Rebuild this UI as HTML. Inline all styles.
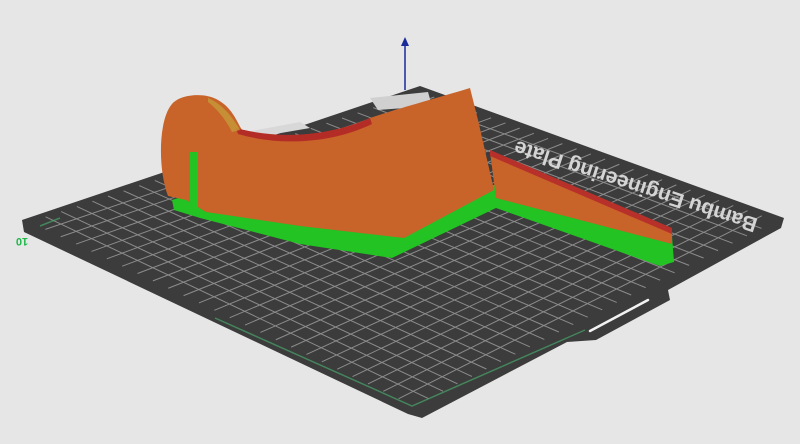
<!DOCTYPE html>
<html><head><meta charset="utf-8"><style>
html,body{margin:0;padding:0;background:#e6e6e6;width:800px;height:444px;overflow:hidden}
svg{display:block}
</style></head><body>
<svg id="s" width="800" height="444" viewBox="0 0 800 444" xmlns="http://www.w3.org/2000/svg">
<rect width="800" height="444" fill="#e6e6e6"/>
<polygon points="22,220 420,86 784,218 781,228 668,290 670,300 596,340 567,342 422,418 408,414 24,232" fill="#3b3c3b"/>
<g id="grid" stroke="#9a9a9a" stroke-width="1" opacity="0.85"></g>
<path d="M215,318 L412,406 L585,330" stroke="#4aa36b" stroke-width="1.5" fill="none" opacity="0.7"/>
<path d="M40,226 L60,218" stroke="#4aa36b" stroke-width="1.5" fill="none" opacity="0.7"/>
<path d="M590,331 L648,300" stroke="#f2f2f2" stroke-width="2.5" stroke-linecap="round"/>
<text x="0" y="0" transform="translate(636,185) rotate(198)" fill="#d4d4d4" font-family="Liberation Sans,sans-serif" font-size="21" font-weight="bold" text-anchor="middle" dominant-baseline="middle">Bambu Engineering Plate</text>
<text x="0" y="0" transform="translate(22,238) rotate(180)" fill="#1fb84a" font-family="Liberation Sans,sans-serif" font-size="11" font-weight="bold" text-anchor="middle">10</text>
<polygon points="230,135 300,122 310,128 240,140" fill="#d8d8d8"/>
<polygon points="370,98 428,92 432,106 378,110" fill="#d0d0d0"/>
<polygon points="172,200 190,194 400,232 486,186 500,184 672,236 674,262 660,266 496,208 392,258 300,244 200,218 174,210" fill="#22c322"/>
<polygon points="490,152 672,230 672,244 496,198" fill="#c8632a"/>
<polygon points="490,150 672,228 672,234 490,156" fill="#b8302a"/>
<path d="M168,196 C158,170 158,120 172,104 C180,94 205,92 218,100 C232,108 236,120 242,130 C280,140 330,136 370,118 C400,108 430,100 470,88 L478,120 L494,190 L404,238 L300,226 L206,212 L186,200 Z" fill="#c8632a"/>
<path d="M236,128 C280,140 330,136 370,118 L372,124 C330,144 280,146 238,134 Z" fill="#b42c26"/>
<path d="M208,98 C222,104 232,116 240,130 L232,132 C226,120 218,110 208,102 Z" fill="#c69a3a" opacity="0.8"/>
<rect x="190" y="152" width="8" height="58" fill="#22c322"/>
<line x1="405" y1="42" x2="405" y2="90" stroke="#1a2a9a" stroke-width="1.5"/>
<polygon points="401,46 405,37 409,46" fill="#1a2a9a"/>
</svg>
<script>
(function(){
var g=document.getElementById('grid');
var L=[30,222],T=[420,92],R=[776,221],B=[414,406];
function p(u,v){
 var x=(1-u)*(1-v)*L[0]+u*(1-v)*T[0]+u*v*R[0]+(1-u)*v*B[0];
 var y=(1-u)*(1-v)*L[1]+u*(1-v)*T[1]+u*v*R[1]+(1-u)*v*B[1];return [x,y];}
var n=25,s='';
for(var i=1;i<n;i++){var t=i/n;
 var a=p(t,0),b=p(t,1);s+='<line x1="'+a[0]+'" y1="'+a[1]+'" x2="'+b[0]+'" y2="'+b[1]+'"/>';
 a=p(0,t);b=p(1,t);s+='<line x1="'+a[0]+'" y1="'+a[1]+'" x2="'+b[0]+'" y2="'+b[1]+'"/>';}
g.innerHTML=s;
})();
</script>
</body></html>
